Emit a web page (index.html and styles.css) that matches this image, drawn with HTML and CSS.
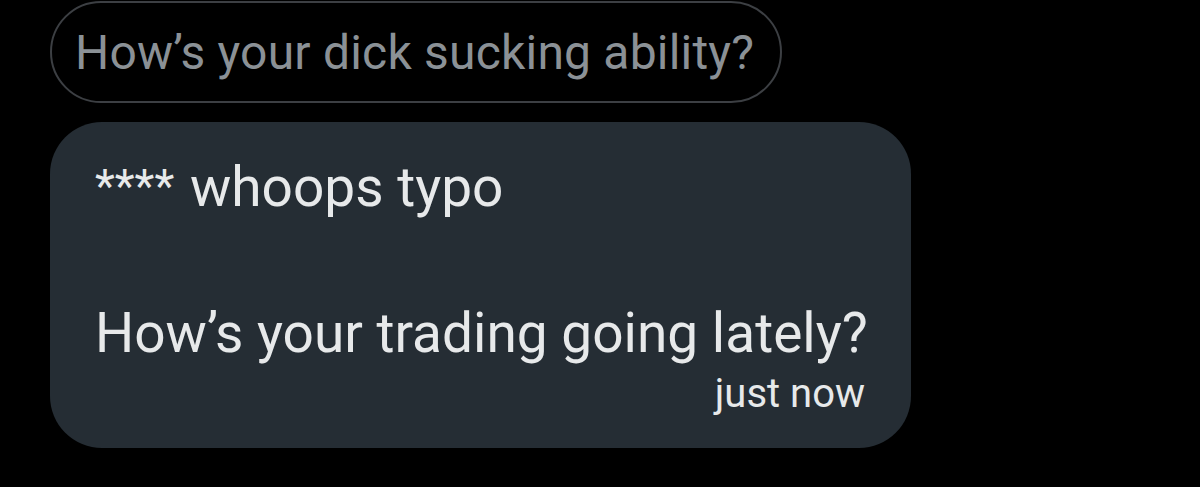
FILE: index.html
```html
<!DOCTYPE html>
<html>
<head>
<meta charset="utf-8">
<link rel="stylesheet" href="styles.css">
</head>
<body>
<div class="thread">
  <div class="reply-pill">How’s your dick sucking ability?</div>
  <div class="bubble">
    <p class="line"><span class="stars">****</span> whoops typo</p>
    <p class="line blank">&nbsp;</p>
    <p class="line">How’s your trading going lately?</p>
    <div class="time">just now</div>
  </div>
</div>
</body>
</html>
```

FILE: styles.css
```css
html, body {
  margin: 0;
  padding: 0;
  background: #000;
  height: 100%;
  overflow: hidden;
}
.thread {
  display: flex;
  flex-direction: column;
  align-items: flex-start;
  padding: 1px 0 0 50px;
  font-family: Roboto, "Noto Sans", sans-serif;
}
.reply-pill {
  box-sizing: border-box;
  height: 102px;
  width: 732px;
  border: 2px solid #3c3f43;
  border-radius: 51px;
  display: flex;
  align-items: center;
  padding: 0 0 0 23px;
  color: #8b9196;
  font-size: 48px;
  letter-spacing: 0.2px;
  white-space: nowrap;
}
.bubble {
  box-sizing: border-box;
  margin-top: 19px;
  width: 861px;
  height: 326px;
  background: #252d34;
  border-radius: 52px;
  padding: 28px 46px 0 45px;
  color: #e7e9ea;
}
.line {
  margin: 0;
  font-size: 55px;
  line-height: 73px;
  white-space: nowrap;
}
.stars {
  font-size: 46px;
  vertical-align: 4px;
  margin-right: 2px;
}
.time {
  text-align: right;
  font-size: 40px;
  line-height: 48px;
}
```
